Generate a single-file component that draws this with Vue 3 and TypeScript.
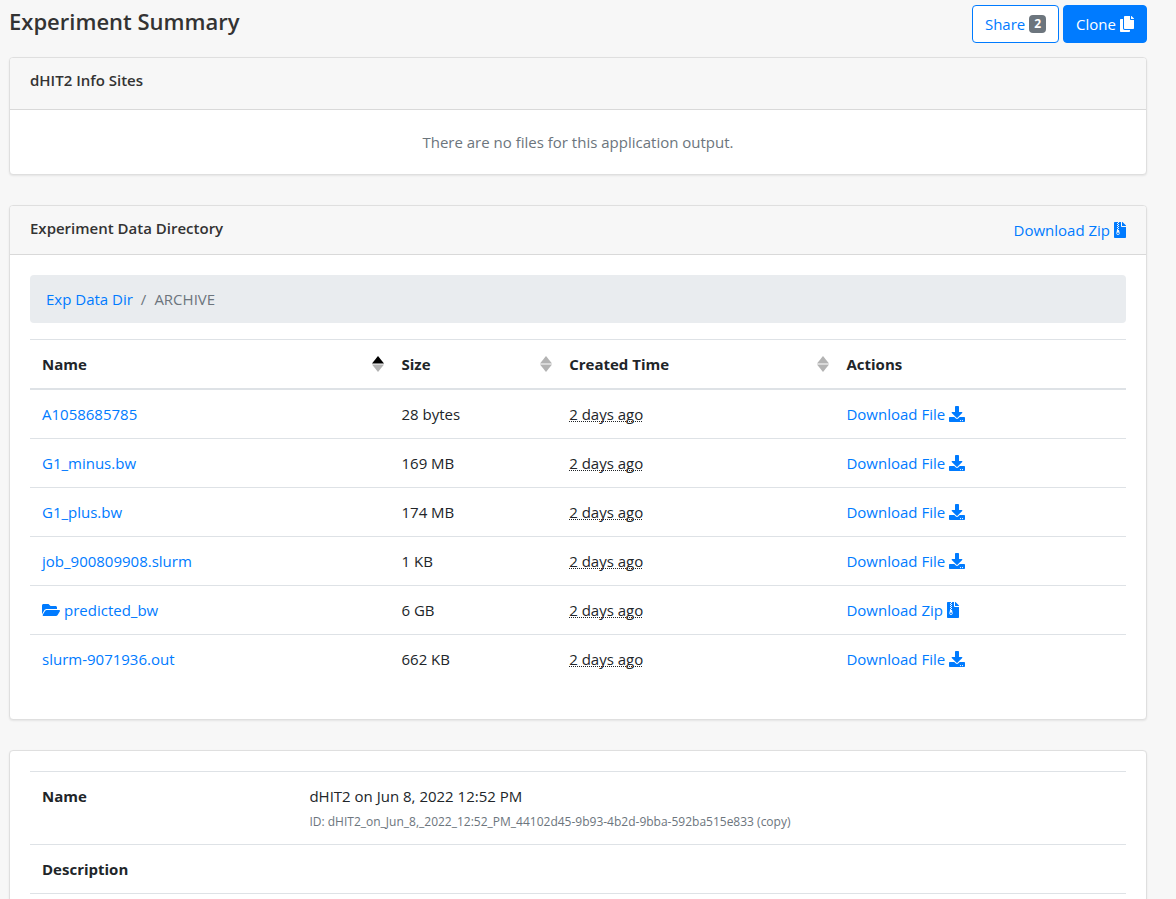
<script setup lang="ts">
import { computed, ref } from 'vue'

type SortKey = 'name' | 'size' | 'created'

interface Entry {
  name: string
  size: string
  bytes: number
  created: string
  folder: boolean
}

const entries: Entry[] = [
  { name: 'A1058685785', size: '28 bytes', bytes: 28, created: '2 days ago', folder: false },
  { name: 'G1_minus.bw', size: '169 MB', bytes: 169e6, created: '2 days ago', folder: false },
  { name: 'G1_plus.bw', size: '174 MB', bytes: 174e6, created: '2 days ago', folder: false },
  { name: 'job_900809908.slurm', size: '1 KB', bytes: 1e3, created: '2 days ago', folder: false },
  { name: 'predicted_bw', size: '6 GB', bytes: 6e9, created: '2 days ago', folder: true },
  { name: 'slurm-9071936.out', size: '662 KB', bytes: 662e3, created: '2 days ago', folder: false },
]

const columns: { key: SortKey; label: string }[] = [
  { key: 'name', label: 'Name' },
  { key: 'size', label: 'Size' },
  { key: 'created', label: 'Created Time' },
]

const sortKey = ref<SortKey>('name')
const ascending = ref(true)

function sortBy(key: SortKey) {
  ascending.value = sortKey.value === key ? !ascending.value : true
  sortKey.value = key
}

const sorted = computed(() => {
  const sign = ascending.value ? 1 : -1
  return [...entries].sort((a, b) => {
    if (sortKey.value === 'size') return sign * (a.bytes - b.bytes)
    if (sortKey.value === 'created') return sign * a.created.localeCompare(b.created)
    return sign * a.name.localeCompare(b.name)
  })
})

const icons = {
  copy: 'M320 448v40c0 13.255-10.745 24-24 24H24c-13.255 0-24-10.745-24-24V120c0-13.255 10.745-24 24-24h72v296c0 30.879 25.121 56 56 56h168zm0-344V0H152c-13.255 0-24 10.745-24 24v368c0 13.255 10.745 24 24 24h272c13.255 0 24-10.745 24-24V128H344c-13.2 0-24-10.8-24-24zm120.971-31.029L375.029 7.029A24 24 0 0 0 358.059 0H352v96h96v-6.059a24 24 0 0 0-7.029-16.97z',
  archive: 'M377 105L279.1 7c-4.5-4.5-10.6-7-17-7H256v128h128v-6.1c0-6.3-2.5-12.4-7-16.9zM128.4 336c-17.9 0-32.4 12.1-32.4 27 0 15 14.6 27 32.5 27s32.4-12.1 32.4-27-14.6-27-32.5-27zM224 136V0h-63.6v32h-32V0H24C10.7 0 0 10.7 0 24v464c0 13.3 10.7 24 24 24h336c13.3 0 24-10.7 24-24V160H248c-13.2 0-24-10.8-24-24zM95.9 32h32v32h-32zm32.3 384c-33.2 0-58-30.4-51.4-62.9L96.4 256v-32h32v-32h-32v-32h32v-32h-32V96h32V64h32v32h-32v32h32v32h-32v32h32v32h-32v32h22.1c5.7 0 10.7 4.1 11.8 9.7l17.3 87.7c6.4 32.4-18.4 62.6-51.4 62.6z',
  download: 'M216 0h80c13.3 0 24 10.7 24 24v168h87.7c17.8 0 26.7 21.5 14.1 34.1L269.7 378.3c-7.5 7.5-19.8 7.5-27.3 0L90.1 226.1c-12.6-12.6-3.7-34.1 14.1-34.1H192V24c0-13.3 10.7-24 24-24zm296 376v112c0 13.3-10.7 24-24 24H24c-13.3 0-24-10.7-24-24V376c0-13.3 10.7-24 24-24h146.7l49 49c20.1 20.1 52.5 20.1 72.6 0l49-49H488c13.3 0 24 10.7 24 24zm-124 88c0-11-9-20-20-20s-20 9-20 20 9 20 20 20 20-9 20-20zm64 0c0-11-9-20-20-20s-20 9-20 20 9 20 20 20 20-9 20-20z',
  folder: 'M572.694 292.093L500.27 416.248A63.997 63.997 0 0 1 444.989 448H45.025c-18.523 0-30.064-20.093-20.731-36.093l72.424-124.155A64 64 0 0 1 152 256h399.964c18.523 0 30.064 20.093 20.73 36.093zM152 224h328v-48c0-26.51-21.49-48-48-48H272l-64-64H48C21.49 64 0 85.49 0 112v278.046l69.077-118.418C86.214 242.25 117.989 224 152 224z',
}
</script>

<template>
  <main class="page">
    <header class="top">
      <h1>Experiment Summary</h1>
      <div class="buttons">
        <button type="button" class="btn outline">Share <span class="badge">2</span></button>
        <button type="button" class="btn primary">
          Clone
          <svg class="icon w14" viewBox="0 0 448 512" aria-hidden="true"><path :d="icons.copy" /></svg>
        </button>
      </div>
    </header>

    <section class="card">
      <div class="card-header">
        <h2 class="spaced">dHIT2 Info Sites</h2>
      </div>
      <div class="card-body">
        <p class="empty">There are no files for this application output.</p>
      </div>
    </section>

    <section class="card">
      <div class="card-header">
        <h2>Experiment Data Directory</h2>
        <a href="#" class="link">
          Download Zip
          <svg class="icon w12" viewBox="0 0 384 512" aria-hidden="true"><path :d="icons.archive" /></svg>
        </a>
      </div>
      <div class="card-body">
        <nav aria-label="Directory">
          <ol class="breadcrumb">
            <li><a href="#">Exp Data Dir</a></li>
            <li class="current" aria-current="page">ARCHIVE</li>
          </ol>
        </nav>
        <table class="files">
          <colgroup>
            <col class="c-name" />
            <col class="c-size" />
            <col class="c-created" />
            <col />
          </colgroup>
          <thead>
            <tr>
              <th
                v-for="c in columns"
                :key="c.key"
                scope="col"
                class="sortable"
                :aria-sort="sortKey === c.key ? (ascending ? 'ascending' : 'descending') : 'none'"
              >
                <button type="button" class="sort" @click="sortBy(c.key)">
                  {{ c.label }}
                  <svg class="arrows" viewBox="0 0 12 16" aria-hidden="true">
                    <path :class="{ on: sortKey === c.key && ascending }" d="M6 0l6 7.5H0z" />
                    <path :class="{ on: sortKey === c.key && !ascending }" d="M6 16l6-7.5H0z" />
                  </svg>
                </button>
              </th>
              <th scope="col">Actions</th>
            </tr>
          </thead>
          <tbody>
            <tr v-for="e in sorted" :key="e.name">
              <td>
                <a href="#" class="link">
                  <svg v-if="e.folder" class="icon w18" viewBox="0 0 576 512" aria-hidden="true"><path :d="icons.folder" /></svg>
                  {{ e.name }}
                </a>
              </td>
              <td>{{ e.size }}</td>
              <td><span class="ago">{{ e.created }}</span></td>
              <td>
                <a v-if="e.folder" href="#" class="link">
                  Download Zip
                  <svg class="icon w12" viewBox="0 0 384 512" aria-hidden="true"><path :d="icons.archive" /></svg>
                </a>
                <a v-else href="#" class="link">
                  Download File
                  <svg class="icon w16" viewBox="0 0 512 512" aria-hidden="true"><path :d="icons.download" /></svg>
                </a>
              </td>
            </tr>
          </tbody>
        </table>
      </div>
    </section>

    <section class="card">
      <div class="card-body">
        <table class="details">
          <colgroup>
            <col class="c-label" />
            <col />
          </colgroup>
          <tbody>
            <tr>
              <th scope="row">Name</th>
              <td>
                <div>dHIT2 on Jun 8, 2022 12:52 PM</div>
                <small>ID: dHIT2_on_Jun_8,_2022_12:52_PM_44102d45-9b93-4b2d-9bba-592ba515e833 (<span>copy</span>)</small>
              </td>
            </tr>
            <tr class="last">
              <th scope="row">Description</th>
              <td></td>
            </tr>
          </tbody>
        </table>
      </div>
    </section>
  </main>
</template>

<style>
body {
  margin: 0;
  background: #f7f7f7;
}
</style>

<style scoped>
* {
  box-sizing: border-box;
}
.page {
  height: 100vh;
  overflow: hidden;
  padding: 5px 29px 0 9px;
  background: #f7f7f7;
  color: #212529;
  font: 400 15px/24px "Open Sans", "Noto Sans", sans-serif;
}
.top {
  display: flex;
  justify-content: space-between;
  align-items: flex-start;
  margin-bottom: 14px;
}
h1,
h2,
p,
ol {
  margin: 0;
}
h1 {
  font-size: 22px;
  line-height: 32px;
  font-weight: 600;
  color: #333;
}
.buttons {
  display: flex;
  gap: 4px;
}
.btn {
  display: flex;
  align-items: center;
  gap: 4px;
  height: 38px;
  padding: 0 12px;
  border: 1px solid #007bff;
  border-radius: 4px;
  font: inherit;
  cursor: pointer;
}
.outline {
  background: #fff;
  color: #007bff;
}
.primary {
  background: #007bff;
  color: #fff;
}
.badge {
  padding: 0 5px;
  border-radius: 4px;
  background: #6c757d;
  color: #fff;
  font-size: 12px;
  line-height: 18px;
  font-weight: 700;
}
.icon {
  flex: none;
  height: 16px;
  fill: currentColor;
}
.w12 {
  width: 12px;
}
.w14 {
  width: 14px;
}
.w16 {
  width: 16px;
}
.w18 {
  width: 18px;
}
.card {
  margin-bottom: 30px;
  border: 1px solid #dfdfdf;
  border-radius: 4px;
  background: #fff;
  box-shadow: 0 1px 2px rgba(0, 0, 0, 0.08);
}
.card-header {
  display: flex;
  justify-content: space-between;
  align-items: flex-start;
  padding: 12px 20px;
  border-bottom: 1px solid #d9d9d9;
  background: #f7f7f7;
  border-radius: 3px 3px 0 0;
}
h2 {
  font-size: 15px;
  line-height: 20px;
  font-weight: 600;
  color: #333;
}
.spaced {
  margin-bottom: 7px;
}
.card-body {
  padding: 20px;
}
.empty {
  text-align: center;
  color: #6c757d;
}
a {
  color: #007bff;
  text-decoration: none;
}
.link {
  display: inline-flex;
  align-items: center;
  gap: 4px;
  vertical-align: top;
}
.breadcrumb {
  display: flex;
  margin-bottom: 16px;
  padding: 12px 16px;
  border-radius: 4px;
  background: #e9ecef;
  list-style: none;
}
.current {
  color: #6c757d;
}
.current::before {
  content: "/";
  padding: 0 8px;
}
table {
  width: 100%;
  border-collapse: separate;
  border-spacing: 0;
  table-layout: fixed;
}
.files {
  margin-bottom: 16px;
}
th,
td {
  padding: 12px;
  border-top: 1px solid #dee2e6;
  text-align: left;
  vertical-align: top;
}
th {
  font-weight: 700;
}
thead th {
  border-bottom: 2px solid #dee2e6;
}
tbody tr:first-child td {
  border-top: 0;
}
.details tbody tr:first-child td {
  border-top: 1px solid #dee2e6;
}
.sortable {
  padding-right: 5px;
}
.sort {
  display: flex;
  justify-content: space-between;
  align-items: center;
  width: 100%;
  padding: 0;
  border: 0;
  background: none;
  color: inherit;
  font: inherit;
  cursor: pointer;
}
.arrows {
  width: 12px;
  height: 16px;
  fill: #b3b3b3;
}
.arrows .on {
  fill: #000;
}
.c-name {
  width: 32.8%;
}
.c-size {
  width: 15.3%;
}
.c-created {
  width: 25.3%;
}
.c-label {
  width: 24.4%;
}
.ago {
  text-decoration: underline dotted 1px;
  text-decoration-skip-ink: none;
  text-underline-offset: 1px;
}
small {
  display: block;
  margin-top: 4px;
  font-size: 12px;
  line-height: 20px;
  color: #6c757d;
}
.last th,
.last td {
  border-bottom: 1px solid #dee2e6;
}
</style>
